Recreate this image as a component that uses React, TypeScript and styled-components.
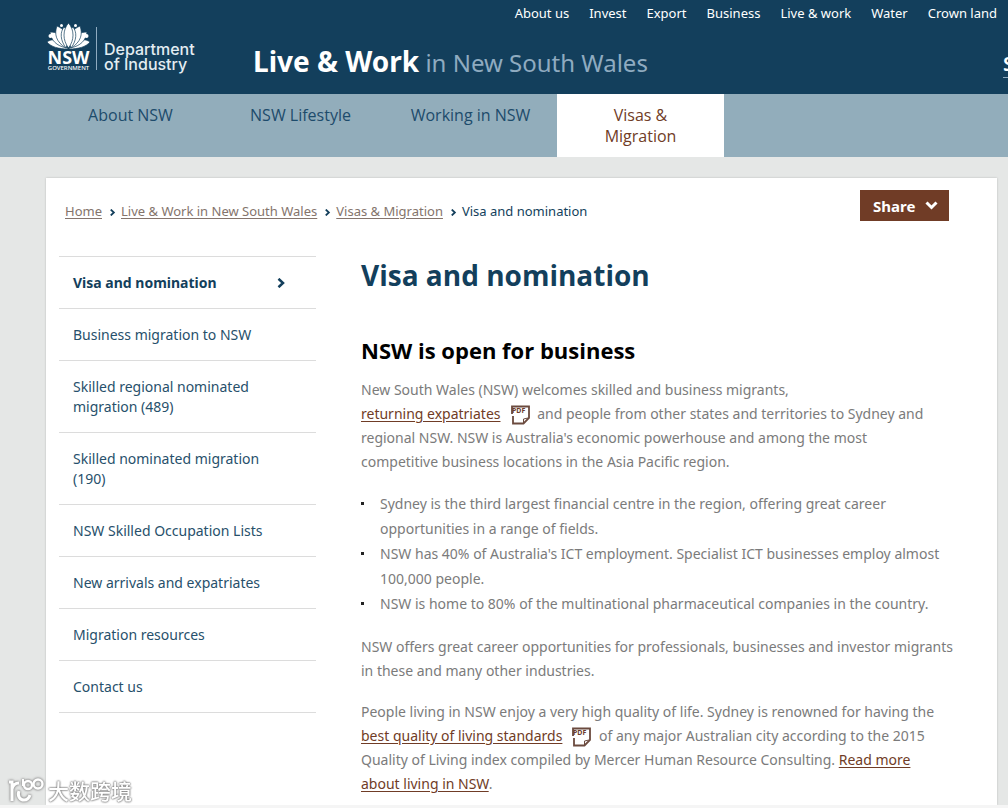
import React from 'react';
import styled, { createGlobalStyle, css } from 'styled-components';

const navy = '#133f5c';
const brown = '#703c26';
const sans = "'Noto Sans', 'Open Sans', 'Noto Sans CJK SC', sans-serif";
const openSans = "'Open Sans', 'Noto Sans', sans-serif";

const GlobalStyle = createGlobalStyle`
  *, *::before, *::after { box-sizing: border-box; }
  body {
    margin: 0;
    background: #e5e7e6;
    color: #7b7b7b;
    font-family: ${sans};
    font-size: 14px;
    line-height: 24px;
  }
  h1, h2, p, ul, ol { margin: 0; padding: 0; }
  ul, ol { list-style: none; }
  a { color: inherit; }
`;

const Page = styled.div`
  display: flex;
  flex-direction: column;
  min-height: 100vh;
`;

const Header = styled.header`
  background: ${navy};
  color: #fff;
  height: 94px;
  overflow: hidden;
`;

const UtilityLinks = styled.ul`
  display: flex;
  justify-content: flex-end;
  gap: 20px;
  padding: 3px 11px 0 0;
  font-size: 13px;
  line-height: 20px;

  a { text-decoration: none; }
`;

const BrandRow = styled.div`
  display: flex;
  align-items: flex-start;
  padding-left: 47px;
  white-space: nowrap;
`;

const Logo = styled.a`
  display: flex;
  flex: none;
  width: 206px;
  text-decoration: none;
`;

const Department = styled.span`
  padding: 19px 0 0 7px;
  height: 49px;
  font: 500 16px/15px Inter, ${sans};
  color: #e3edf2;
`;

const SiteTitle = styled.div`
  padding-top: 18px;
  font-size: 24px;
  line-height: 40px;
  color: #8fabc0;

  strong { font-size: 28px; color: #fff; }
`;

const Search = styled.a`
  width: 75px;
  margin: 28px -70px 0 auto;
  border-bottom: 1px solid #8fabc0;
  font-size: 20px;
  font-weight: 600;
  line-height: 26px;
  text-decoration: none;
`;

const MainNav = styled.nav`
  display: flex;
  gap: 3px;
  min-height: 63px;
  padding-left: 47px;
  background: #92adbb;
`;

const NavItem = styled.a<{ $active?: boolean }>`
  display: flex;
  justify-content: center;
  width: 167px;
  padding: 11px 40px 9px;
  color: #1d4b6b;
  font: 400 16px/21px ${openSans};
  text-align: center;
  text-decoration: none;
  white-space: nowrap;

  ${p => p.$active && css`
    background: #fff;
    color: ${brown};
    white-space: normal;
  `}
`;

const Panel = styled.div`
  flex: 1;
  margin: 21px 11px 0 46px;
  padding: 12px 40px 9px 13px;
  background: #fff;
  box-shadow: 0 0 2px rgba(0, 0, 0, 0.2);
`;

const PanelTop = styled.div`
  display: flex;
  align-items: flex-end;
  justify-content: space-between;
  padding: 0 8px 0 6px;
`;

const Crumbs = styled.ol`
  display: flex;
  color: ${navy};
  font-size: 13px;
  line-height: 20px;

  li { display: flex; align-items: center; }
  a { color: #84746c; text-underline-offset: 2px; }
  svg { margin: 2px 5px 0 7px; }
`;

const ShareButton = styled.button`
  display: flex;
  align-items: center;
  justify-content: space-between;
  width: 89px;
  height: 31px;
  padding: 0 11px 0 13px;
  border: 0;
  background: ${brown};
  color: #fff;
  font: 700 15px/20px ${sans};
`;

const Columns = styled.div`
  display: flex;
  gap: 45px;
  margin-top: 34px;
`;

const SideNav = styled.nav`
  flex: none;
  width: 257px;
  padding-top: 1px;

  ul { border-top: 1px solid #dcdcdc; }
  li { border-bottom: 1px solid #dcdcdc; }
`;

const SideLink = styled.a<{ $current?: boolean }>`
  display: flex;
  align-items: center;
  justify-content: space-between;
  padding: 16px 30px 15px 14px;
  color: ${p => (p.$current ? navy : '#27506b')};
  line-height: 20px;
  text-decoration: none;
  font-weight: ${p => (p.$current ? 700 : 400)};
`;

const Article = styled.main`
  flex: 1;
  min-width: 0;

  p { margin-bottom: 17px; }
  p:last-child { margin-bottom: 0; }
`;

const PageTitle = styled.h1`
  color: ${navy};
  font: 700 28px/40px ${openSans};
`;

const SectionTitle = styled.h2`
  margin: 40px 0 13px;
  color: #000;
  font: 700 22px/30px ${openSans};
`;

const TextLink = styled.a`
  color: ${brown};
  text-underline-offset: 2px;
`;

const DocLink = styled.span`
  white-space: nowrap;

  svg { margin: 0 4px 0 10px; vertical-align: -6px; }
`;

const Facts = styled.ul`
  margin-bottom: 19px;
  line-height: 25px;

  li { position: relative; padding-left: 19px; }
  li::before {
    content: '';
    position: absolute;
    left: 0;
    top: 11px;
    width: 3px;
    height: 3px;
    background: #222;
  }
`;

const Strip = styled.footer`
  height: 3px;
  background: #f5f5f5;
`;

const Watermark = styled.div`
  position: fixed;
  left: 7px;
  bottom: 3px;
  display: flex;
  align-items: center;
  gap: 3px;
  color: #fff;
  font: 500 21px/30px 'Noto Sans CJK SC', sans-serif;
  text-shadow: 0 0 2px #777, 0 0 2px #888, 0 0 2px #999;

  svg { filter: drop-shadow(0 0 1px #888) drop-shadow(0 0 1px #aaa); }
`;

const Waratah = () => (
  <svg width="43" height="48" viewBox="0 0 43 48" fill="#fff" aria-label="NSW Government">
    <g stroke={navy} strokeWidth="0.7">
      <path d="M21 26C12 26 4 24 0 19c4-3 9-3 13 0 4 1 7 4 8 7z" />
      <path d="M22 26c9 0 17-2 21-7-4-3-9-3-13 0-4 1-7 4-8 7z" />
      <path d="M20 25C9 23 4 17 3 9c7 0 12 3 14 8z" />
      <path d="M23 25c11-2 16-8 17-16-7 0-12 3-14 8z" />
      <path d="M19 25C9 19 7 11 10 3c7 3 10 8 10 14z" />
      <path d="M24 25c10-6 12-14 9-22-7 3-10 8-10 14z" />
      <path d="M19 25c-6-8-6-16-2-21 4 3 5 7 5 12z" />
      <path d="M24 25c6-8 6-16 2-21-4 3-5 7-5 12z" />
      <path d="M21.500 25c-6-8-6-18 0-25 6 7 6 17 0 25z" />
    </g>
    <circle cx="3.500" cy="13" r="2" />
    <circle cx="39.500" cy="13" r="2" />
    <circle cx="14.500" cy="2.500" r="1.500" />
    <circle cx="28.500" cy="2.500" r="1.500" />
    <text x="21.500" y="41" textAnchor="middle" fontFamily="Noto Sans" fontWeight="700" fontSize="18">NSW</text>
    <text x="21.500" y="47" textAnchor="middle" fontFamily="Noto Sans" fontWeight="500" fontSize="6">GOVERNMENT</text>
  </svg>
);

const Divider = () => (
  <svg width="1" height="43" aria-hidden="true"><rect width="1" height="43" fill="#8fabc0" /></svg>
);

const LogoArt = styled.span`
  display: flex;
  gap: 6px;

  svg:last-child { margin-top: 4px; }
`;

const ChevronRight = ({ size = 8 }: { size?: number }) => (
  <svg width={size} height={size} viewBox="0 0 8 8" fill="none" stroke={navy} strokeWidth="2" aria-hidden="true">
    <path d="M2 0.600L5.600 4 2 7.400" />
  </svg>
);

const ChevronDown = () => (
  <svg width="13" height="9" viewBox="0 0 13 9" fill="none" stroke="#fff" strokeWidth="3" aria-hidden="true">
    <path d="M1.500 1.500l5 5 5-5" />
  </svg>
);

const PdfIcon = () => (
  <svg width="19" height="20" viewBox="0 0 19 20" fill="none" stroke="#6b4a3e" aria-label="PDF">
    <path d="M1 9V1.500h17V13l-5.500 5.500H2V11" strokeWidth="1.800" />
    <path d="M17 13l-4.500 1v4" strokeWidth="1" />
    <text x="1" y="8" fill="#6b3a2a" stroke="none" fontFamily="Noto Sans" fontWeight="700" fontSize="7">PDF</text>
  </svg>
);

const utility = ['About us', 'Invest', 'Export', 'Business', 'Live & work', 'Water', 'Crown land'];
const sections = ['About NSW', 'NSW Lifestyle', 'Working in NSW', 'Visas & Migration'];
const crumbs = ['Home', 'Live & Work in New South Wales', 'Visas & Migration'];
const sideLinks = [
  'Visa and nomination',
  'Business migration to NSW',
  'Skilled regional nominated migration (489)',
  'Skilled nominated migration (190)',
  'NSW Skilled Occupation Lists',
  'New arrivals and expatriates',
  'Migration resources',
  'Contact us',
];
const facts = [
  'Sydney is the third largest financial centre in the region, offering great career opportunities in a range of fields.',
  "NSW has 40% of Australia's ICT employment. Specialist ICT businesses employ almost 100,000 people.",
  'NSW is home to 80% of the multinational pharmaceutical companies in the country.',
];

export default function App() {
  return (
    <Page>
      <GlobalStyle />
      <Header>
        <UtilityLinks>
          {utility.map(t => <li key={t}><a href="#">{t}</a></li>)}
        </UtilityLinks>
        <BrandRow>
          <Logo href="#">
            <LogoArt><Waratah /><Divider /></LogoArt>
            <Department>Department<br />of Industry</Department>
          </Logo>
          <SiteTitle><strong>Live &amp; Work</strong> in New South Wales</SiteTitle>
          <Search href="#">Search</Search>
        </BrandRow>
      </Header>
      <MainNav>
        {sections.map((t, i) => <NavItem key={t} href="#" $active={i === 3}>{t}</NavItem>)}
      </MainNav>
      <Panel>
        <PanelTop>
          <Crumbs>
            {crumbs.map(t => <li key={t}><a href="#">{t}</a><ChevronRight size={7} /></li>)}
            <li>Visa and nomination</li>
          </Crumbs>
          <ShareButton>Share <ChevronDown /></ShareButton>
        </PanelTop>
        <Columns>
          <SideNav>
            <ul>
              {sideLinks.map((t, i) => (
                <li key={t}>
                  <SideLink href="#" $current={i === 0}>{t}{i === 0 && <ChevronRight size={10} />}</SideLink>
                </li>
              ))}
            </ul>
          </SideNav>
          <Article>
            <PageTitle>Visa and nomination</PageTitle>
            <SectionTitle>NSW is open for business</SectionTitle>
            <p>
              New South Wales (NSW) welcomes skilled and business migrants,{' '}
              <DocLink><TextLink href="#">returning expatriates</TextLink><PdfIcon /></DocLink>{' '}
              and people from other states and territories to Sydney and regional NSW. NSW is
              Australia's economic powerhouse and among the most<br />competitive business locations
              in the Asia Pacific region.
            </p>
            <Facts>{facts.map(t => <li key={t}>{t}</li>)}</Facts>
            <p>
              NSW offers great career opportunities for professionals, businesses and investor
              migrants in these and many other industries.
            </p>
            <p>
              People living in NSW enjoy a very high quality of life. Sydney is renowned for having the{' '}
              <DocLink><TextLink href="#">best quality of living standards</TextLink><PdfIcon /></DocLink>{' '}
              of any major Australian city according to the 2015 Quality of Living index compiled
              by Mercer Human Resource Consulting.{' '}
              <TextLink href="#">Read more<br />about living in NSW</TextLink>.
            </p>
          </Article>
        </Columns>
      </Panel>
      <Strip />
      <Watermark>
        <svg width="38" height="27" viewBox="0 0 38 27" fill="none" stroke="#fff" strokeWidth="3" aria-hidden="true">
          <path d="M2 5h3v19M5 12c1-4 3-6 7-6M12 14c-2 5 1 9 5 9 3 0 5-2 6-5" />
          <circle cx="21" cy="8" r="4" strokeWidth="2.400" />
          <circle cx="31" cy="7" r="4.500" strokeWidth="2.400" />
          <path d="M16 2v7" strokeWidth="2" />
        </svg>
        大数跨境
      </Watermark>
    </Page>
  );
}
